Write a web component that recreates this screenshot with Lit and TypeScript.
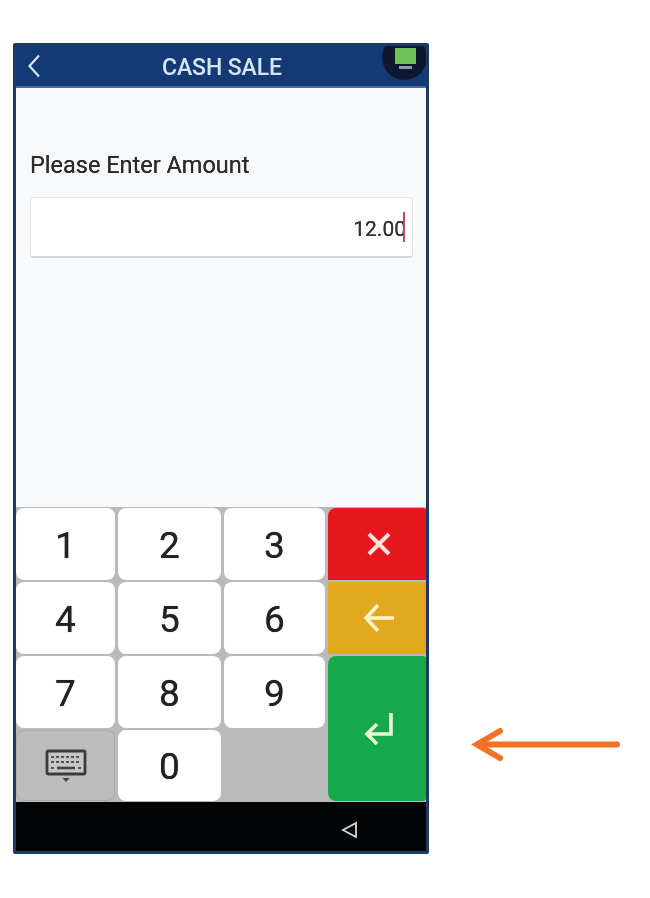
import { LitElement, html, css } from "lit";
import { customElement } from "lit/decorators.js";

@customElement("app-root")
export class AppRoot extends LitElement {
  static styles = css`
    :host { display: block; width: 650px; height: 898px; background: #fff; overflow: hidden; font-family: Roboto, "Liberation Sans", sans-serif; }
    .page { display: flex; align-items: flex-start; padding: 43px 0 0 13px; }
    .phone { width: 410px; height: 805px; border: 3px solid #1c3a63; border-radius: 2px; background: #f8f9fb; display: flex; flex-direction: column; filter: blur(0.5px); flex: none; }
    .head { position: relative; height: 40px; flex: none; overflow: hidden; background: #143a76; border-bottom: 2px solid #4f6c98; display: flex; align-items: center; justify-content: center; }
    .back { position: absolute; left: 11px; top: 8px; }
    .title { color: #d5e4f3; font-size: 23px; line-height: 40px; margin-left: 2px; padding-top: 3px; font-weight: 500; letter-spacing: -0.1px; }
    .badge { position: absolute; right: -1px; top: -11px; width: 45px; height: 45px; border-radius: 50%; background: #0e1830; }
    .badge i { position: absolute; display: block; }
    .screen { left: 13px; top: 13px; width: 21px; height: 16px; background: #6fc256; }
    .stand { left: 17px; top: 31px; width: 13px; height: 3px; background: #8d9aa3; }
    .body { flex: 1; padding: 63px 13px 0 14px; }
    .label { font-size: 23.5px; line-height: 28px; color: #2b2b2b; text-shadow: 0 0 0.6px #2b2b2b; }
    .field { margin-top: 18px; height: 61px; box-sizing: border-box; background: #fff; border: 1px solid #e4e5e7; border-bottom: 2px solid #d5d6d8; border-radius: 4px; display: flex; align-items: center; justify-content: flex-end; padding-right: 7px; font-size: 21px; color: #333; text-shadow: 0 0 0.6px #333; }
    .value { padding-top: 3px; }
    .caret { width: 2px; height: 30px; margin-left: -3px; background: #c2476d; }
    .pad { display: grid; grid-template-columns: 99px 103px 101px 98px; grid-template-rows: 72px 72px 72px 71px; gap: 2px 3px; padding: 1px 0 1px; background: #bababa; flex: none; }
    .key { background: #fff; border-radius: 8px; display: flex; align-items: center; justify-content: center; font-size: 37px; color: #222; text-shadow: 0 0 0.7px #222; padding-top: 2px; box-sizing: border-box; }
    .key.kb { background: #bcbcbc; border: 1px solid #acacac; padding-top: 0; }
    .key.x { background: #e8161f; border-radius: 8px 3px 0 0; padding: 0 0 0 3px; }
    .key.del { background: #e3a91e; border-radius: 0; padding: 0 0 0 3px; }
    .key.ok { background: #16a94b; border-radius: 8px 3px 3px 8px; grid-row: span 2; padding: 0 0 0 3px; }
    .nav { height: 49px; flex: none; background: #020406; display: flex; align-items: center; justify-content: flex-end; padding: 6px 68px 0 0; box-sizing: border-box; }
    .pointer { flex: none; margin: 681px 0 0 41px; display: block; }
  `;

  private key(n: string) {
    return html`<div class="key">${n}</div>`;
  }

  render() {
    return html`
      <div class="page">
        <div class="phone">
          <div class="head">
            <svg class="back" width="14" height="24" viewBox="0 0 14 24"><path d="M12 1.500 L2.500 12 L12 22.500" fill="none" stroke="#d5e4f3" stroke-width="2.200"/></svg>
            <div class="title">CASH SALE</div>
            <div class="badge"><i class="screen"></i><i class="stand"></i></div>
          </div>
          <div class="body">
            <div class="label">Please Enter Amount</div>
            <div class="field"><span class="value">12.00</span><span class="caret"></span></div>
          </div>
          <div class="pad">
            ${this.key("1")}${this.key("2")}${this.key("3")}
            <div class="key x"><svg width="28" height="28" viewBox="0 0 28 28"><path d="M4 4 L24 24 M24 4 L4 24" stroke="#fbe3e0" stroke-width="4" fill="none"/></svg></div>
            ${this.key("4")}${this.key("5")}${this.key("6")}
            <div class="key del"><svg width="34" height="32" viewBox="0 0 34 32"><path d="M32 16 H4 M16 3 L4 16 L16 29" stroke="#fdf2c8" stroke-width="3.600" fill="none"/></svg></div>
            ${this.key("7")}${this.key("8")}${this.key("9")}
            <div class="key ok"><svg width="32" height="34" viewBox="0 0 32 34"><path d="M28 1 V22 H5 M14 12 L4 22 L14 32" stroke="#e9f6d5" stroke-width="3.600" fill="none"/></svg></div>
            <div class="key kb">
              <svg width="42" height="34" viewBox="0 0 42 34">
                <rect x="2" y="2" width="38" height="23" rx="1.500" fill="#c6c6c6" stroke="#3c3c3c" stroke-width="2.800"/>
                <path d="M6 8 H36 M6 13 H36" stroke="#555" stroke-width="2.200" stroke-dasharray="3 2"/>
                <path d="M12 19 H30" stroke="#444" stroke-width="2.600"/>
                <path d="M6 19 H9 M33 19 H36" stroke="#555" stroke-width="2.200"/>
                <path d="M17.500 29 H24.500 L21 33 Z" fill="#444"/>
              </svg>
            </div>
            ${this.key("0")}
            <div></div>
          </div>
          <div class="nav">
            <svg width="17" height="18" viewBox="0 0 17 18"><path d="M15 2 V16 L2 9 Z" fill="none" stroke="#d8d8d8" stroke-width="1.800"/></svg>
          </div>
        </div>
        <svg class="pointer" width="150" height="40" viewBox="0 0 150 40">
          <path d="M147 20.500 H8" stroke="#f37124" stroke-width="6" stroke-linecap="round" fill="none"/>
          <path d="M30 7 L7 20.500 L30 34" stroke="#f37124" stroke-width="6" stroke-linecap="round" stroke-linejoin="miter" fill="none"/>
        </svg>
      </div>
    `;
  }
}
